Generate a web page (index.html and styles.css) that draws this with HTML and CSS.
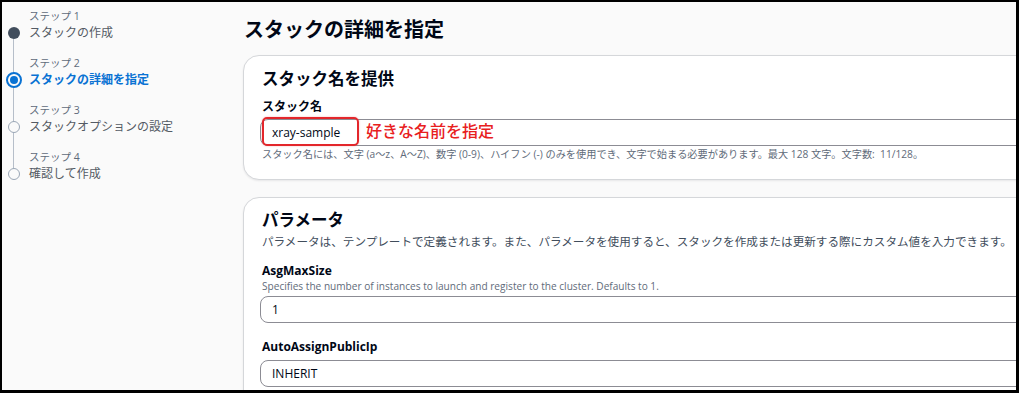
FILE: index.html
```html
<!DOCTYPE html>
<html lang="ja">
<head>
<meta charset="utf-8">
<link rel="stylesheet" href="styles.css">
</head>
<body>
<div class="frame">
  <nav class="steps">
    <div class="step first done">
      <div class="rail"><div class="seg-top"></div><div class="dotbox"><span class="dot dot-done"></span></div><div class="seg-bottom"></div></div>
      <div class="step-text"><div class="step-label">ステップ 1</div><div class="step-title">スタックの作成</div></div>
    </div>
    <div class="step current">
      <div class="rail"><div class="seg-top"></div><div class="dotbox"><span class="dot dot-current"><span class="dot-inner"></span></span></div><div class="seg-bottom"></div></div>
      <div class="step-text"><div class="step-label">ステップ 2</div><div class="step-title">スタックの詳細を指定</div></div>
    </div>
    <div class="step">
      <div class="rail"><div class="seg-top"></div><div class="dotbox"><span class="dot dot-todo"></span></div><div class="seg-bottom"></div></div>
      <div class="step-text"><div class="step-label">ステップ 3</div><div class="step-title">スタックオプションの設定</div></div>
    </div>
    <div class="step last">
      <div class="rail"><div class="seg-top"></div><div class="dotbox"><span class="dot dot-todo"></span></div><div class="seg-bottom"></div></div>
      <div class="step-text"><div class="step-label">ステップ 4</div><div class="step-title">確認して作成</div></div>
    </div>
  </nav>
  <main class="main">
    <h1 class="page-title">スタックの詳細を指定</h1>
    <section class="card card-name">
      <h2 class="card-title">スタック名を提供</h2>
      <div class="field-label">スタック名</div>
      <div class="input-wrap">
        <div class="input">xray-sample</div>
        <div class="highlight"></div>
        <div class="note">好きな名前を指定</div>
      </div>
      <div class="help">スタック名には、文字 (a〜z、A〜Z)、数字 (0-9)、ハイフン (-) のみを使用でき、文字で始まる必要があります。最大 128 文字。文字数:&nbsp; 11/128。</div>
    </section>
    <section class="card card-params">
      <h2 class="card-title">パラメータ</h2>
      <p class="card-desc">パラメータは、テンプレートで定義されます。また、パラメータを使用すると、スタックを作成または更新する際にカスタム値を入力できます。</p>
      <div class="field-label param-first">AsgMaxSize</div>
      <div class="param-desc">Specifies the number of instances to launch and register to the cluster. Defaults to 1.</div>
      <div class="input input-a">1</div>
      <div class="field-label param-next">AutoAssignPublicIp</div>
      <div class="input input-b">INHERIT</div>
    </section>
  </main>
</div>
</body>
</html>
```
FILE: styles.css
```css
* { box-sizing: border-box; }
html, body { margin: 0; padding: 0; }
body {
  font-family: "Open Sans", "Noto Sans CJK JP", sans-serif;
  color: #000716;
  background: #fff;
}
.frame {
  width: 1019px;
  height: 393px;
  border: 2px solid #000;
  border-right-width: 3px;
  border-bottom-width: 3px;
  background: #fafafa;
  display: flex;
  overflow: hidden;
}
.steps {
  width: 241px;
  flex: none;
  padding-top: 6px;
}
.step {
  display: flex;
  gap: 4px;
}
.rail {
  width: 23px;
  display: flex;
  flex-direction: column;
  align-items: center;
}
.seg-top { height: 16px; width: 1px; background: #b6bec9; }
.seg-bottom { flex: 1; width: 1px; background: #b6bec9; }
.first .seg-top, .last .seg-bottom { background: transparent; }
.dotbox {
  height: 18px;
  width: 23px;
  display: flex;
  align-items: center;
  justify-content: center;
  background: linear-gradient(#b6bec9, #b6bec9) center / 1px 100% no-repeat;
}
.first .dotbox { background: linear-gradient(#b6bec9, #b6bec9) center bottom / 1px 50% no-repeat; }
.last .dotbox { background: linear-gradient(#b6bec9, #b6bec9) center top / 1px 50% no-repeat; }
.dot { display: block; border-radius: 50%; }
.dot-done { width: 12px; height: 12px; background: #414d5c; }
.dot-current {
  width: 16px; height: 16px;
  border: 2px solid #0972d3;
  background: #fafafa;
  display: flex; align-items: center; justify-content: center;
}
.dot-inner { width: 8px; height: 8px; border-radius: 50%; background: #0972d3; }
.dot-todo { width: 12px; height: 12px; border: 1.5px solid #9ba7b6; background: #fafafa; }
.step-text { padding-bottom: 13px; }
.last .step-text { padding-bottom: 0; }
.step-label {
  font-size: 10.5px;
  line-height: 16px;
  color: #5f6b7a;
}
.step-title {
  font-size: 12px;
  line-height: 18px;
  color: #545b64;
}
.current .step-title { color: #0972d3; font-weight: 700; }

.main {
  flex: 1;
  min-width: 0;
}
.page-title {
  margin: 14px 0 0 1px;
  font-size: 20px;
  line-height: 28px;
  font-weight: 700;
}
.card {
  margin-right: -60px;
  background: #fff;
  border: 1px solid #d5d7da;
  border-radius: 16px;
  box-shadow: 0 1px 2px rgba(0, 7, 22, 0.08);
  padding: 0 18px;
}
.card-name { margin-top: 11px; padding-top: 11px; padding-bottom: 17px; }
.card-params { margin-top: 17px; padding-top: 10px; padding-bottom: 20px; }
.card-title {
  margin: 0;
  font-size: 16.5px;
  line-height: 24px;
  font-weight: 700;
}
.field-label {
  font-size: 12px;
  line-height: 18px;
  font-weight: 700;
}
.card-name .field-label { margin-top: 7px; }
.input-wrap {
  position: relative;
  margin-top: 3px;
  margin-left: -2px;
}
.input {
  height: 27px;
  border: 1px solid #8c8c94;
  border-radius: 8px;
  background: #fff;
  padding-left: 11px;
  font-size: 12px;
  line-height: 25px;
  color: #000716;
}
.highlight {
  position: absolute;
  left: 2px;
  top: -2px;
  width: 97px;
  height: 29px;
  border: 2px solid #e3262b;
  border-radius: 5px;
  box-shadow: 0 0 2px rgba(227, 38, 43, 0.35);
}
.note {
  position: absolute;
  left: 106px;
  top: 1px;
  font-size: 16px;
  line-height: 22px;
  font-weight: 500;
  color: #e8201e;
}
.help {
  font-size: 10.2px;
  line-height: 16px;
  color: #5f6b7a;
}
.card-desc {
  margin: 1px 0 0;
  font-size: 11.6px;
  line-height: 18px;
  color: #414d5c;
}
.param-first { margin-top: 12px; line-height: 16px; }
.param-desc {
  font-size: 10.1px;
  line-height: 14px;
  color: #5f6b7a;
}
.input-a { margin-top: 3px; margin-left: -2px; }
.param-next { margin-top: 16px; line-height: 16px; }
.input-b { margin-top: 5px; margin-left: -2px; }
```
